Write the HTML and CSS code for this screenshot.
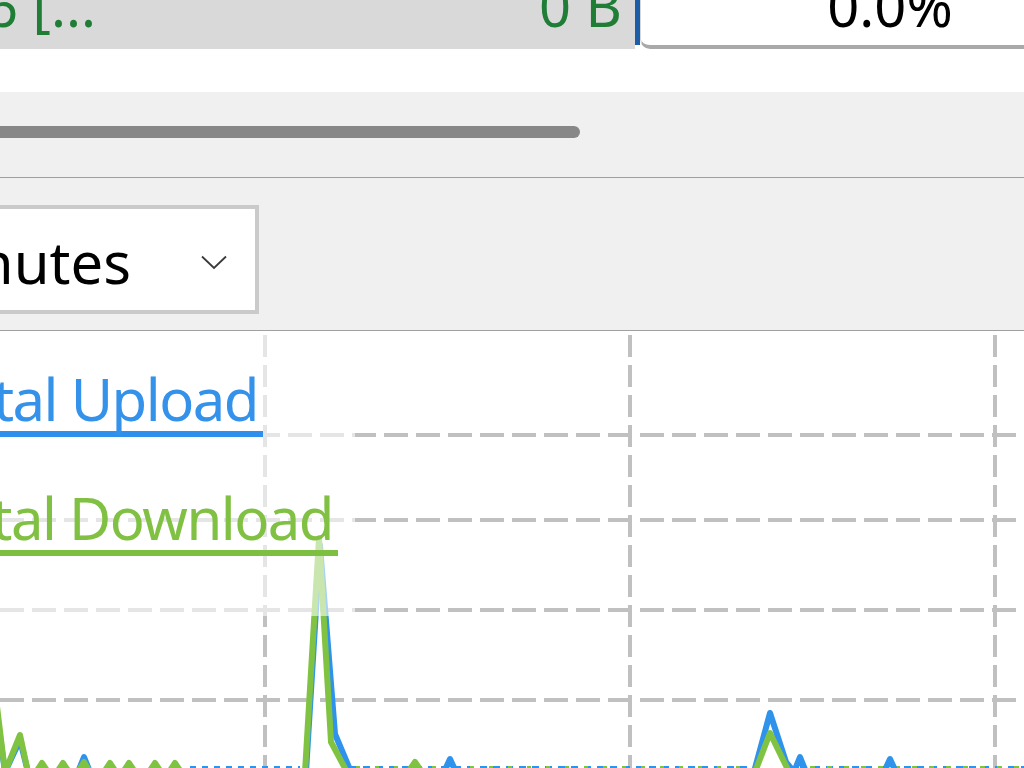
FILE: index.html
```html
<!DOCTYPE html>
<html lang="en">
<head>
<meta charset="utf-8">
<title>Speed</title>
<link rel="stylesheet" href="styles.css">
</head>
<body>
<div class="page">
  <div class="row-top">
    <div class="cell-gray">
      <div class="name"><span>6 [...</span></div>
      <div class="size"><span>0 B</span></div>
    </div>
    <div class="sel-bar"></div>
    <div class="progress"><span>0.0%</span></div>
  </div>
  <div class="band-white"></div>
  <div class="scroll"><div class="thumb"></div></div>
  <div class="sep"></div>
  <div class="toolbar">
    <div class="combo">
      <span class="combo-text">5 Minutes</span>
      <svg class="chev" width="26" height="15" viewBox="0 0 26 15"><polyline points="1,1.5 13,13 25,1.5" fill="none" stroke="#3a3a3a" stroke-width="1.8"/></svg>
    </div>
  </div>
  <div class="chart">
    <svg class="plot" width="1024" height="437" viewBox="0 331 1024 437">
      <g stroke="#c0c0c0" stroke-width="4" fill="none">
        <line x1="265" y1="331" x2="265" y2="768" stroke-dasharray="22 8" stroke-dashoffset="-4"/>
        <line x1="630" y1="331" x2="630" y2="768" stroke-dasharray="22 8" stroke-dashoffset="-4"/>
        <line x1="995" y1="331" x2="995" y2="768" stroke-dasharray="22 8" stroke-dashoffset="-4"/>
        <line x1="0" y1="435" x2="1024" y2="435" stroke-dasharray="24 8"/>
        <line x1="0" y1="520" x2="1024" y2="520" stroke-dasharray="24 8"/>
        <line x1="0" y1="610" x2="1024" y2="610" stroke-dasharray="24 8"/>
        <line x1="0" y1="700" x2="1024" y2="700" stroke-dasharray="24 8"/>
      </g>
      <g fill="none" stroke-width="3">
        <line x1="190" y1="767.5" x2="300" y2="767.5" stroke="#2f93ec" stroke-dasharray="6 6"/>
        <line x1="350" y1="767.5" x2="750" y2="767.5" stroke="#2f93ec" stroke-dasharray="7 6"/>
        <line x1="356" y1="767.5" x2="750" y2="767.5" stroke="#80c342" stroke-dasharray="4 15"/>
        <line x1="800" y1="767.5" x2="1024" y2="767.5" stroke="#2f93ec" stroke-dasharray="7 6"/>
        <line x1="810" y1="767.5" x2="1024" y2="767.5" stroke="#80c342" stroke-dasharray="5 12"/>
      </g>
      <polyline fill="none" stroke="#2f93ec" stroke-width="6" stroke-linejoin="round"
        points="-5,700 5,772 20,740 28,772 78,772 84,757 90,772 306,772 320,545 335,734 351,772 444,772 450,759 456,772 754,772 770,713 786,762 794,772 800,757 806,772 884,772 890,759 896,772 1030,772"/>
      <polyline fill="none" stroke="#80c342" stroke-width="6" stroke-linejoin="round"
        points="-5,690 5,772 20,735 28,772 36,772 42,763 48,772 57,772 63,763 69,772 78,772 84,762 90,772 104,772 110,763 116,772 123,772 129,763 135,772 149,772 155,763 161,772 169,772 175,763 181,772 305,772 319,538 331,742 347,772 408,772 415,762 422,772 755,772 770,733 789,772 1030,772"/>
    </svg>
    <div class="legend">
      <div class="lg-item lg-up">Total Upload</div>
      <div class="lg-item lg-down">Total Download</div>
    </div>
  </div>
</div>
</body>
</html>
```
FILE: styles.css
```css
html, body {
  margin: 0;
  padding: 0;
  background: #ffffff;
}
body {
  font-family: "Noto Sans", "Open Sans", sans-serif;
}
.page {
  width: 1024px;
  height: 768px;
  overflow: hidden;
  display: flex;
  flex-direction: column;
}
.row-top {
  display: flex;
  height: 49px;
  flex-shrink: 0;
}
.cell-gray {
  display: flex;
  flex-shrink: 0;
  width: 635px;
  height: 49px;
  background: #d9d9d9;
  overflow: hidden;
  color: #1f7d36;
  font-size: 56px;
}
.name {
  flex: 1;
  margin-left: -14px;
  white-space: nowrap;
}
.name span, .size span, .progress span {
  display: block;
  line-height: 56px;
  margin-top: -23px;
}
.size {
  padding-right: 13px;
  white-space: nowrap;
}
.sel-bar {
  flex-shrink: 0;
  width: 5px;
  height: 45px;
  background: #1c5da8;
}
.progress {
  flex-shrink: 0;
  box-sizing: border-box;
  width: 499px;
  height: 49px;
  background: #ffffff;
  border-bottom: 4px solid #a9a9a9;
  border-left: 1px solid #d6d6d6;
  border-bottom-left-radius: 10px;
  text-align: center;
  font-size: 56px;
  color: #000000;
  overflow: hidden;
}
.band-white {
  flex-shrink: 0;
  height: 43px;
  background: #ffffff;
}
.scroll {
  flex-shrink: 0;
  box-sizing: border-box;
  height: 85px;
  padding-top: 34px;
  background: #f0f0f0;
}
.thumb {
  width: 780px;
  margin-left: -200px;
  height: 12px;
  background: #878787;
  border-radius: 6px;
}
.sep {
  flex-shrink: 0;
  height: 1px;
  background: #a0a0a0;
}
.toolbar {
  flex-shrink: 0;
  box-sizing: border-box;
  height: 153px;
  padding-top: 27px;
  background: #f0f0f0;
  border-bottom: 1px solid #a0a0a0;
}
.combo {
  box-sizing: border-box;
  width: 459px;
  margin-left: -200px;
  height: 109px;
  border: 4px solid #cacaca;
  background: #ffffff;
  display: flex;
  align-items: center;
  justify-content: flex-end;
  padding-right: 28px;
  font-size: 58px;
  line-height: 64px;
  color: #000000;
}
.combo-text {
  white-space: nowrap;
  margin-top: 4px;
}
.chev {
  display: block;
  margin-left: 70px;
  margin-top: 6px;
}
.chart {
  position: relative;
  flex: 1;
  background: #ffffff;
}
.plot {
  display: block;
}
.legend {
  position: absolute;
  top: 0;
  left: -90px;
  box-sizing: border-box;
  width: 445px;
  height: 285px;
  padding-top: 36px;
  background: rgba(255, 255, 255, 0.58);
}
.lg-item {
  box-sizing: border-box;
  text-align: right;
  font-size: 58px;
  line-height: 64px;
  letter-spacing: -1.5px;
  padding-right: 5px;
  white-space: nowrap;
  border-bottom: 6px solid;
}
.lg-up {
  width: 353px;
  color: #3492ea;
  border-color: #2e8fed;
}
.lg-down {
  width: 428px;
  margin-top: 49px;
  color: #80c042;
  border-color: #7dbf40;
}
```
